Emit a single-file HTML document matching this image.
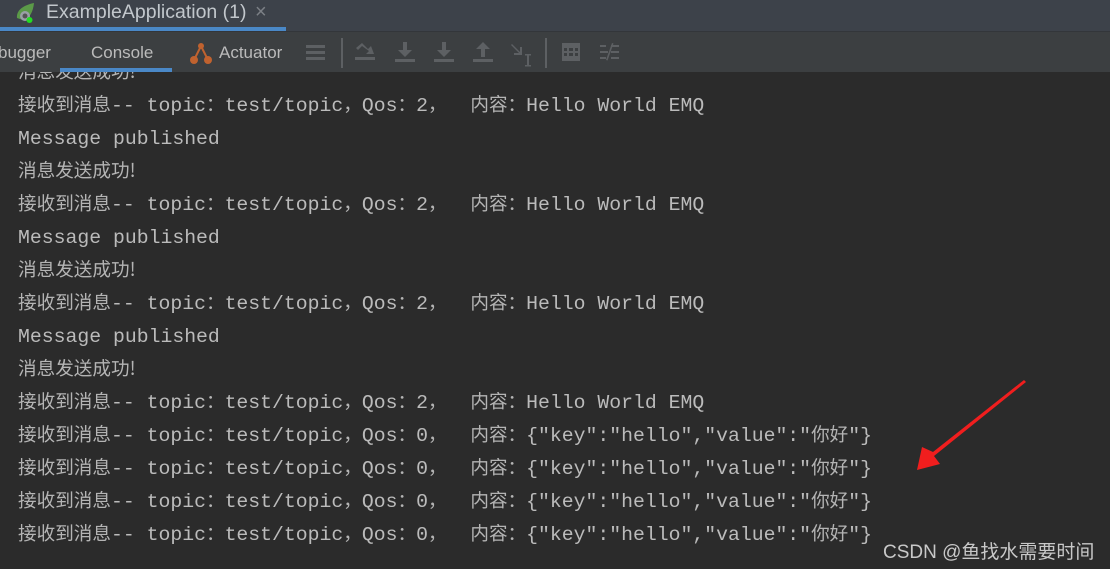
<!DOCTYPE html>
<html><head><meta charset="utf-8"><style>
*{margin:0;padding:0;box-sizing:border-box}
body{width:1110px;height:569px;overflow:hidden;background:#2b2b2b;position:relative;font-family:"Liberation Sans","Noto Sans CJK SC",sans-serif}
#top{position:absolute;left:0;top:0;width:1110px;height:31px;background:#3d424a}
#tab{position:absolute;left:0;top:0;width:286px;height:31px;}
#tab .t{position:absolute;left:46px;top:1px;font-size:19.5px;color:#c2c7cc}
#tab .x{position:absolute;left:255px;top:1px;font-size:20px;color:#7c8086}
#tab .ul{position:absolute;left:0;top:27px;width:286px;height:4px;background:#4a88c7}
#tb{position:absolute;left:0;top:31px;width:1110px;height:41px;background:#3c3f41;border-top:1px solid #33363a}
.tl{position:absolute;top:11px;font-size:17px;color:#bbbbbb}
#cul{position:absolute;left:60px;top:68px;width:112px;height:4px;background:#4a88c7}
#con{position:absolute;left:0;top:72px;width:1110px;height:497px;overflow:hidden}
#lines{position:absolute;left:18px;top:-15px;font-family:"Liberation Mono","Noto Sans CJK SC",monospace;font-size:19.8px;color:#bbbbbb}
#lines div{height:33px;line-height:33px;overflow:visible;white-space:pre}
#lines c{font-family:"Noto Sans CJK SC",sans-serif;font-size:18.6px;color:#b4b4b4;line-height:1}
.wm{position:absolute;left:883px;top:537px;font-size:19px;color:#c8c8c8}
</style></head><body>
<div id="top">
 <div id="tab">
  <svg style="position:absolute;left:14px;top:2px" width="26" height="22" viewBox="0 0 26 22"><path d="M3 16 C2 8 10 3 20 1 C19 10 16 16 9 18 Z" fill="#5b9a48"/><circle cx="11" cy="14" r="5" fill="#9aa0a6"/><circle cx="11" cy="14" r="2.5" fill="#555"/><circle cx="15.5" cy="18" r="3" fill="#22dd22"/></svg>
  <div class="t">ExampleApplication (1)</div><div class="x">×</div><div class="ul"></div>
 </div>
</div>
<div id="tb">
 <div class="tl" style="left:-2px">bugger</div>
 <div class="tl" style="left:91px">Console</div>
 <svg style="position:absolute;left:189px;top:9px" width="24" height="24" viewBox="0 0 24 24"><path d="M5 19 L12 5 L19 19" stroke="#c0622f" stroke-width="2" fill="none"/><circle cx="12" cy="5" r="3" fill="#c0622f"/><circle cx="5" cy="19" r="4" fill="#c0622f"/><circle cx="19" cy="19" r="4" fill="#c0622f"/></svg>
 <div class="tl" style="left:219px">Actuator</div>
 <svg style="position:absolute;left:300px;top:0" width="340" height="41" viewBox="0 0 340 41" fill="#5d6063" stroke="none">
  <rect x="6" y="13" width="19" height="3"/><rect x="6" y="19" width="19" height="3"/><rect x="6" y="25" width="19" height="3"/>
  <rect x="41" y="6" width="2" height="30"/>
  <path d="M56 16 L62 11 L68 17 L71 14 L74 22 L66 22 L69 19 L62 14 L58 18Z"/><rect x="55" y="25" width="20" height="3"/>
  <path d="M103 10 h4 v8 h5 l-7 7 l-7 -7 h5z"/><rect x="95" y="27" width="20" height="3"/>
  <path d="M142 10 h4 v8 h5 l-7 7 l-7 -7 h5z"/><rect x="134" y="27" width="20" height="3"/>
  <path d="M181 25 h4 v-8 h5 l-7 -7 l-7 7 h5z"/><rect x="173" y="27" width="20" height="3"/>
  <path d="M212 12 l8 8 v-5 l2 0 v8 h-8 v-2 h5 l-8 -8z"/><rect x="227" y="22" width="2" height="12"/><rect x="225" y="22" width="6" height="1.5"/><rect x="225" y="33" width="6" height="1.5"/>
  <rect x="245" y="6" width="2" height="30"/>
  <path d="M262 11 h18 v18 h-18z M264 16 v3 h3 v-3z M269 16 v3 h4 v-3z M275 16 v3 h3 v-3z M264 21 v3 h3 v-3z M269 21 v3 h4 v-3z M275 21 v3 h3 v-3z" fill-rule="evenodd"/>
  <rect x="300" y="13" width="6" height="2"/><rect x="311" y="13" width="8" height="2"/><rect x="300" y="19" width="8" height="2"/><rect x="311" y="19" width="8" height="2"/><rect x="300" y="25" width="6" height="2"/><rect x="311" y="25" width="8" height="2"/><path d="M306 28 L312 11 L313.5 11.5 L307.5 28.5Z"/>
 </svg>
</div>
<div id="cul"></div>
<div id="con"><div id="lines"><div><c>消息发送成功!</c></div><div><c>接收到消息</c>-- topic<c>：</c>test/topic<c>，</c>Qos<c>：</c>2<c>，</c>  <c>内容：</c>Hello World EMQ</div><div>Message published</div><div><c>消息发送成功!</c></div><div><c>接收到消息</c>-- topic<c>：</c>test/topic<c>，</c>Qos<c>：</c>2<c>，</c>  <c>内容：</c>Hello World EMQ</div><div>Message published</div><div><c>消息发送成功!</c></div><div><c>接收到消息</c>-- topic<c>：</c>test/topic<c>，</c>Qos<c>：</c>2<c>，</c>  <c>内容：</c>Hello World EMQ</div><div>Message published</div><div><c>消息发送成功!</c></div><div><c>接收到消息</c>-- topic<c>：</c>test/topic<c>，</c>Qos<c>：</c>2<c>，</c>  <c>内容：</c>Hello World EMQ</div><div><c>接收到消息</c>-- topic<c>：</c>test/topic<c>，</c>Qos<c>：</c>0<c>，</c>  <c>内容：</c>{"key":"hello","value":"<c>你好</c>"}</div><div><c>接收到消息</c>-- topic<c>：</c>test/topic<c>，</c>Qos<c>：</c>0<c>，</c>  <c>内容：</c>{"key":"hello","value":"<c>你好</c>"}</div><div><c>接收到消息</c>-- topic<c>：</c>test/topic<c>，</c>Qos<c>：</c>0<c>，</c>  <c>内容：</c>{"key":"hello","value":"<c>你好</c>"}</div><div><c>接收到消息</c>-- topic<c>：</c>test/topic<c>，</c>Qos<c>：</c>0<c>，</c>  <c>内容：</c>{"key":"hello","value":"<c>你好</c>"}</div></div></div>
<svg style="position:absolute;left:0;top:0" width="1110" height="569"><path d="M1026 382 L1024 380 L933 452 L922 447 L917 470 L940 464 L934 456 Z" fill="#f01e1e"/></svg>
<div class="wm">CSDN @鱼找水需要时间</div>
</body></html>
